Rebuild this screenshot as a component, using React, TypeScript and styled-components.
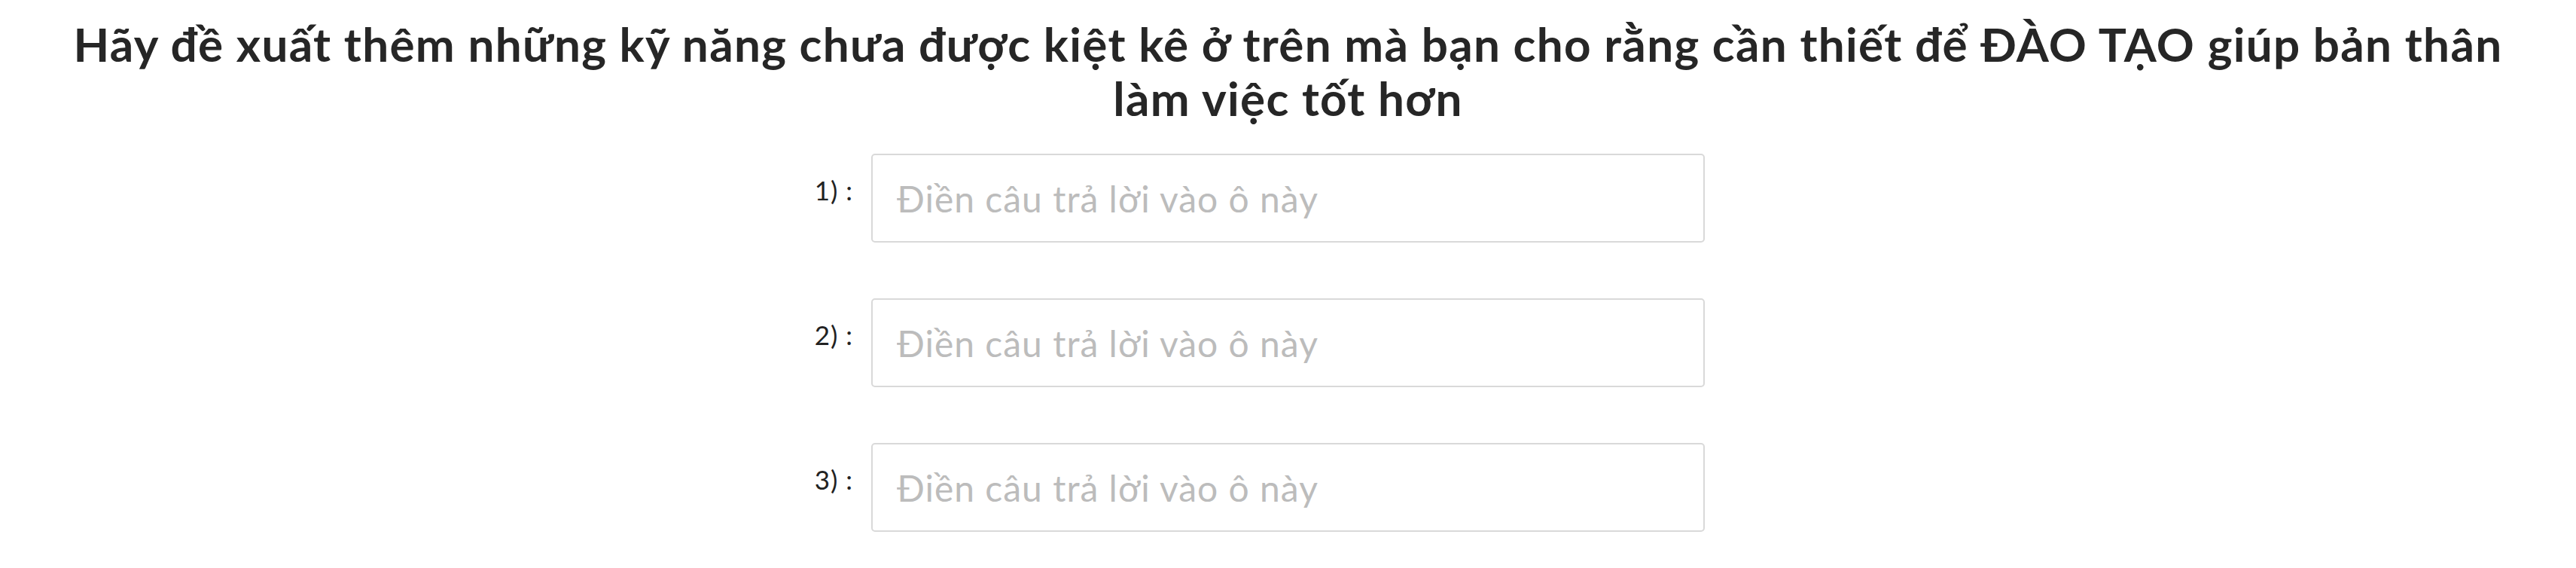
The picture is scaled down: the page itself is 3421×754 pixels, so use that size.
import React from "react";
import styled, { createGlobalStyle } from "styled-components";

const GlobalStyle = createGlobalStyle`
  html, body {
    margin: 0;
    padding: 0;
    background: #ffffff;
  }
  body {
    font-family: Lato, "Open Sans", "Noto Sans", sans-serif;
  }
`;

const Page = styled.main`
  display: flex;
  flex-direction: column;
  align-items: stretch;
  padding: 22px 0 40px;
`;

const Title = styled.h2`
  margin: 0 auto 38px;
  max-width: 3290px;
  text-align: center;
  font-family: Lato, "Open Sans", sans-serif;
  font-weight: 700;
  font-size: 62px;
  letter-spacing: 1.3px;
  line-height: 72px;
  color: #262626;
`;

const List = styled.div`
  display: flex;
  flex-direction: column;
  gap: 74px;
`;

const Row = styled.div`
  display: grid;
  grid-template-columns: 1fr 1107px 1fr;
  column-gap: 24px;
  align-items: start;
`;

const Label = styled.label`
  justify-self: end;
  padding-top: 27px;
  font-family: Lato, "Open Sans", sans-serif;
  font-size: 35px;
  letter-spacing: 1px;
  line-height: 42px;
  color: #222222;
  white-space: nowrap;
`;

const Field = styled.input`
  box-sizing: border-box;
  width: 100%;
  height: 118px;
  margin: 0;
  padding: 0 32px;
  border: 2px solid #d9d9d9;
  border-radius: 5px;
  background: #ffffff;
  font-family: Lato, "Open Sans", sans-serif;
  font-size: 48px;
  letter-spacing: 1px;
  color: #333333;
  outline: none;

  &::placeholder {
    color: #bcbcbc;
    opacity: 1;
  }
`;

const items = ["1) :", "2) :", "3) :"];

export default function App() {
  return (
    <>
      <GlobalStyle />
      <Page>
        <Title>
          Hãy đề xuất thêm những kỹ năng chưa được kiệt kê ở trên mà bạn cho
          rằng cần thiết để ĐÀO TẠO giúp bản thân làm việc tốt hơn
        </Title>
        <List>
          {items.map((label, i) => (
            <Row key={i}>
              <Label htmlFor={`answer-${i}`}>{label}</Label>
              <Field id={`answer-${i}`} placeholder="Điền câu trả lời vào ô này" />
            </Row>
          ))}
        </List>
      </Page>
    </>
  );
}
